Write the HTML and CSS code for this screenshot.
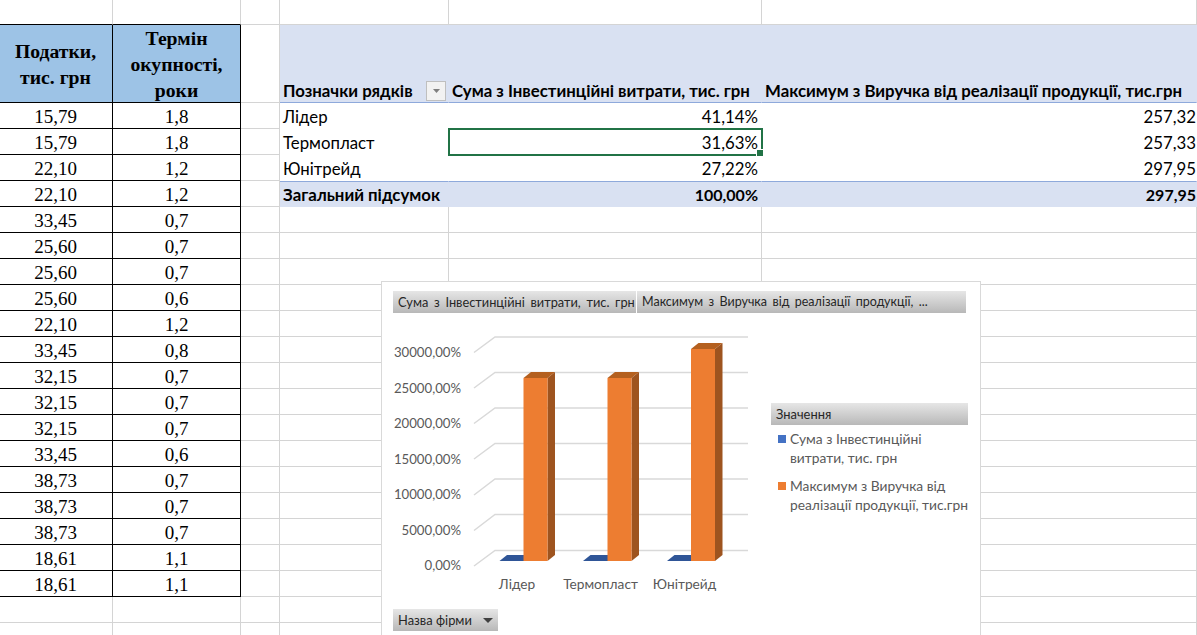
FILE: index.html
```html
<!DOCTYPE html>
<html lang='uk'>
<head>
  <meta charset='utf-8'>
  <title>Аналіз інвестицій</title>
  <link rel="stylesheet" href="styles.css">
</head>
<body>
  <div class='sheet'>
    <table class='grid'>
      <colgroup>
        <col class='colA'><col class='colB'><col class='colC'><col class='colD'><col class='colE'><col class='colF'>
      </colgroup>
      <tr class='topRow'><td></td><td></td><td></td><td></td><td></td><td></td></tr>

      <!-- Table head + pivot head -->
      <tr class='headRow'>
        <td class='tax head'>Податки,<br>тис. грн</td>
        <td class='tax head'>Термін окупності, роки</td>
        <td></td>
        <td class='pivotHead'>
          <div class='labelCell'>
            <span>Позначки рядків</span>
            <button class='filterBtn'><svg width='9' height='6' viewBox='0 0 9 6'><path d='M1 1h7L4.5 5z' fill='#7f7f7f'/></svg></button>
          </div>
        </td>
        <td class='pivotHead'>Сума з Інвестинційні витрати, тис. грн</td>
        <td class='pivotHead'>Максимум з Виручка від реалізації продукції, тис.грн</td>
      </tr>

      <tr><td class='tax'>15,79</td><td class='tax'>1,8</td><td></td><td class='pivot'>Лідер</td><td class='pivot num'>41,14%</td><td class='pivot num last'>257,32</td></tr>
      <tr><td class='tax'>15,79</td><td class='tax'>1,8</td><td></td><td class='pivot'>Термопласт</td><td class='pivot num selected'>31,63%</td><td class='pivot num last'>257,33</td></tr>
      <tr><td class='tax'>22,10</td><td class='tax'>1,2</td><td></td><td class='pivot'>Юнітрейд</td><td class='pivot num'>27,22%</td><td class='pivot num last'>297,95</td></tr>
      <tr><td class='tax'>22,10</td><td class='tax'>1,2</td><td></td><td class='total'>Загальний підсумок</td><td class='total num'>100,00%</td><td class='total num last'>297,95</td></tr>
      <tr><td class='tax'>33,45</td><td class='tax'>0,7</td><td></td><td></td><td></td><td></td></tr>
      <tr><td class='tax'>25,60</td><td class='tax'>0,7</td><td></td><td></td><td></td><td></td></tr>
      <tr><td class='tax'>25,60</td><td class='tax'>0,7</td><td></td><td></td><td></td><td></td></tr>
      <tr><td class='tax'>25,60</td><td class='tax'>0,6</td><td></td><td></td><td></td><td></td></tr>
      <tr><td class='tax'>22,10</td><td class='tax'>1,2</td><td></td><td></td><td></td><td></td></tr>
      <tr><td class='tax'>33,45</td><td class='tax'>0,8</td><td></td><td></td><td></td><td></td></tr>
      <tr><td class='tax'>32,15</td><td class='tax'>0,7</td><td></td><td></td><td></td><td></td></tr>
      <tr><td class='tax'>32,15</td><td class='tax'>0,7</td><td></td><td></td><td></td><td></td></tr>
      <tr><td class='tax'>32,15</td><td class='tax'>0,7</td><td></td><td></td><td></td><td></td></tr>
      <tr><td class='tax'>33,45</td><td class='tax'>0,6</td><td></td><td></td><td></td><td></td></tr>
      <tr><td class='tax'>38,73</td><td class='tax'>0,7</td><td></td><td></td><td></td><td></td></tr>
      <tr><td class='tax'>38,73</td><td class='tax'>0,7</td><td></td><td></td><td></td><td></td></tr>
      <tr><td class='tax'>38,73</td><td class='tax'>0,7</td><td></td><td></td><td></td><td></td></tr>
      <tr><td class='tax'>18,61</td><td class='tax'>1,1</td><td></td><td></td><td></td><td></td></tr>
      <tr><td class='tax'>18,61</td><td class='tax'>1,1</td><td></td><td></td><td></td><td></td></tr>
      <tr><td></td><td></td><td></td><td></td><td></td><td></td></tr>
      <tr><td></td><td></td><td></td><td></td><td></td><td></td></tr>
    </table>

    <!-- Pivot chart floating over the sheet -->
    <div class='chart'>
      <div class='fieldRow'>
        <div class='fieldBtn first'>Сума з Інвестинційні витрати, тис. грн</div>
        <div class='fieldBtn second'>Максимум з Виручка від реалізації продукції, ...</div>
      </div>

      <div class='chartBody'>
        <svg class='plot' width='378' height='296' viewBox='393 313 378 296'>
          <g class='wall'>
            <path d='M474 352.500L495 337H748'/>
            <path d='M474 388L495 372.500H748'/>
            <path d='M474 423.500L495 408H748'/>
            <path d='M474 459L495 443.500H748'/>
            <path d='M474 495L495 479H748'/>
            <path d='M474 530.500L495 514.500H748'/>
            <path d='M474 566L495 550.500H748'/>
          </g>

          <g class='axis'>
            <text x='461' y='357'>30000,00%</text>
            <text x='461' y='392.500'>25000,00%</text>
            <text x='461' y='428'>20000,00%</text>
            <text x='461' y='463.500'>15000,00%</text>
            <text x='461' y='499'>10000,00%</text>
            <text x='461' y='534.500'>5000,00%</text>
            <text x='461' y='570'>0,00%</text>
          </g>

          <g class='cats'>
            <text x='517' y='589'>Лідер</text>
            <text x='600.500' y='589'>Термопласт</text>
            <text x='684.500' y='589'>Юнітрейд</text>
          </g>

          <path class='barBlue' d='M499.500 561L507 555H524V561z'/>
          <path class='barBlue' d='M583 561L590.500 555H608V561z'/>
          <path class='barBlue' d='M667 561L674.500 555H691V561z'/>

          <path class='barTop' d='M523.500 378L531 372H555L547.500 378z'/>
          <path class='barSide' d='M547.500 378L555 372V555L547.500 561z'/>
          <rect class='barFront' x='523.500' y='378' width='24' height='183'/>

          <path class='barTop' d='M607.500 378L615 372H639L631.500 378z'/>
          <path class='barSide' d='M631.500 378L639 372V555L631.500 561z'/>
          <rect class='barFront' x='607.500' y='378' width='24' height='183'/>

          <path class='barTop' d='M691 349L698.500 343H722.500L715 349z'/>
          <path class='barSide' d='M715 349L722.500 343V555L715 561z'/>
          <rect class='barFront' x='691' y='349' width='24' height='212'/>
        </svg>

        <div class='legend'>
          <div class='fieldBtn legendHead'>Значення</div>
          <div class='legendItem'><span class='swatch blue'></span><span>Сума з Інвестинційні витрати, тис. грн</span></div>
          <div class='legendItem'><span class='swatch orange'></span><span>Максимум з Виручка від реалізації продукції, тис.грн</span></div>
        </div>
      </div>

      <div class='fieldBtn axisBtn'>
        <span>Назва фірми</span>
        <svg width='10' height='5' viewBox='0 0 10 5'><path d='M0 0h10L5 5z' fill='#404040'/></svg>
      </div>
    </div>
  </div>
</body>
</html>
```

FILE: styles.css
```css
* {
  box-sizing: border-box;
}

body {
  margin: 0;
  background-color: white;
  color: black;
  font-family: 'Lato', 'Noto Sans', sans-serif;
}

.sheet {
  position: relative;
  width: 1197px;
  height: 635px;
  overflow: hidden;
}

/* Spreadsheet */
.grid {
  table-layout: fixed;
  width: 1197px;
  border-collapse: separate;
  border-spacing: 0;
}

.colA { width: 113px; }
.colB { width: 128px; }
.colC { width: 39px; }
.colD { width: 169px; }
.colE { width: 313px; }
.colF { width: 435px; }

tr {
  height: 26px;
}

td {
  padding: 0;
  border-right: 1px solid #d4d4d4;
  border-bottom: 1px solid #d4d4d4;
  white-space: nowrap;
}

.topRow {
  height: 25px;
}

.topRow td:nth-child(-n+2) {
  border-bottom-color: black;
}

.headRow {
  height: 78px;
}

.tax {
  padding-top: 2px;
  border-right-color: black;
  border-bottom-color: black;
  text-align: center;
  font-family: 'Liberation Serif', serif;
  font-size: 19px;
  line-height: 23px;
}

.tax:first-child {
  padding-right: 1px;
}

/* border drawn inside so three 26px lines still fit the row */
.head {
  padding-top: 0;
  background-color: #9dc3e6;
  border-bottom: none;
  box-shadow: inset 0 -1px black;
  font-size: 19.700px;
  font-weight: bold;
  line-height: 26px;
  white-space: normal;
}

/* Pivot table */
.pivotHead {
  padding: 0 3px;
  vertical-align: bottom;
  background-color: #d9e1f2;
  border-right: 1px solid #d9e1f2;
  border-bottom: 1px solid #8ea9db;
  font-size: 16.800px;
  font-weight: bold;
  line-height: 22px;
}

.labelCell {
  display: flex;
  align-items: center;
  justify-content: space-between;
}

.filterBtn {
  display: flex;
  align-items: center;
  justify-content: center;
  width: 20px;
  height: 20px;
  margin-right: -1px;
  padding: 0;
  background-color: #f2f2f2;
  border: 1px solid #bfbfbf;
}

.pivot, .total {
  padding: 3px 3px 0;
  font-size: 16.800px;
  line-height: 22px;
  border-right-color: white;
  border-bottom-color: white;
}

.total {
  padding-top: 1px;
  background-color: #d9e1f2;
  border-top: 1px solid #8ea9db;
  border-right-color: #d9e1f2;
  border-bottom-color: #d9e1f2;
  font-weight: bold;
}

.total.num {
  font-size: 16px;
}

.num {
  text-align: right;
  padding-right: 3px;
}

.last {
  padding-right: 0;
}

.selected {
  position: relative;
  outline: 2px solid #217346;
  outline-offset: -1px;
}

.selected::after {
  content: '';
  position: absolute;
  right: -3px;
  bottom: -3px;
  width: 6px;
  height: 6px;
  background-color: #217346;
  border: 1px solid white;
}

/* Pivot chart */
.chart {
  position: absolute;
  left: 381px;
  top: 281px;
  width: 600px;
  height: 360px;
  padding: 9px 11px;
  background-color: white;
  border: 1px solid #d9d9d9;
}

.fieldRow {
  display: flex;
  gap: 1px;
}

.fieldBtn {
  height: 22px;
  padding-left: 5px;
  background: linear-gradient(#e6e6e6, #b8b8b8);
  color: #262626;
  font-size: 12.900px;
  line-height: 22px;
  white-space: nowrap;
}

.first {
  width: 243px;
  font-size: 12.800px;
  word-spacing: 2.400px;
}

.second {
  width: 329px;
  font-size: 12.500px;
  word-spacing: 2.200px;
}

.chartBody {
  display: flex;
  height: 296px;
}

.plot {
  flex-shrink: 0;
}

.wall path {
  fill: none;
  stroke: #d9d9d9;
  stroke-width: 1.500;
}

.axis text {
  text-anchor: end;
  fill: #595959;
  font-size: 13.200px;
}

.cats text {
  text-anchor: middle;
  fill: #595959;
  font-size: 13.700px;
}

.barBlue { fill: #2f5597; }
.barFront { fill: #ed7d31; }
.barSide { fill: #9e541f; }
.barTop { fill: #b4601f; }

.legend {
  width: 198px;
  margin-top: 90px;
}

.legendHead {
  width: 197px;
}

.legendItem {
  display: flex;
  align-items: flex-start;
  gap: 4px;
  margin: 4px 0 9px 7px;
  color: #595959;
  font-size: 13.800px;
  line-height: 19px;
}

.swatch {
  flex-shrink: 0;
  width: 8px;
  height: 8px;
  margin-top: 6px;
}

.blue { background-color: #4472c4; }
.orange { background-color: #ed7d31; }

.axisBtn {
  display: flex;
  align-items: center;
  gap: 11px;
  width: 105px;
}
```
